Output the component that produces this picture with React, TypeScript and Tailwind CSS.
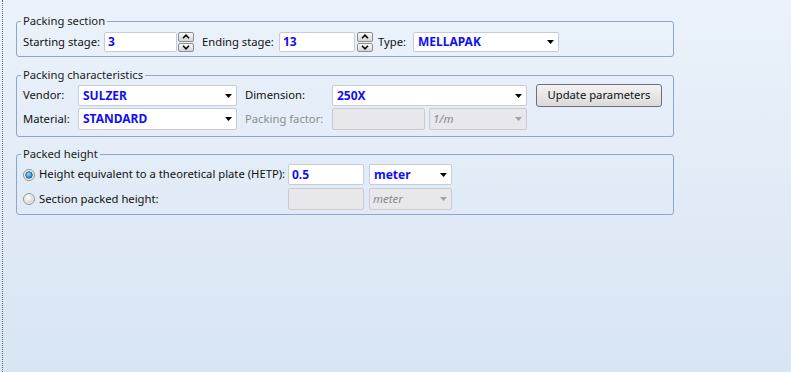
const font = { fontFamily: '"Noto Sans", "Open Sans", sans-serif' };

const Arrow = ({ disabled }: { disabled?: boolean }) => (
  <svg width="7" height="4" viewBox="0 0 7 4" className="shrink-0">
    <path d="M0 0h7L3.5 4z" fill={disabled ? "#a3a3a3" : "#000"} />
  </svg>
);

const Spin = () => (
  <div className="flex h-[20px] w-[16px] flex-col gap-[1px]">
    {[0, 1].map((i) => (
      <div
        key={i}
        className="flex flex-1 items-center justify-center rounded-[2px] border border-[#8c8e92] bg-gradient-to-b from-[#fafafa] to-[#d4d5d8]"
      >
        <svg width="8" height="5" viewBox="0 0 8 5">
          <path
            d={i === 0 ? "M1 4.2L4 1.2L7 4.2" : "M1 0.8L4 3.8L7 0.8"}
            fill="none"
            stroke="#000"
            strokeWidth="1.6"
          />
        </svg>
      </div>
    ))}
  </div>
);

const TextBox = ({ value, w, h = "h-[20px]" }: { value: string; w: string; h?: string }) => (
  <div
    className={`${w} ${h} flex shrink-0 items-center rounded-[2px] border border-[#c5ccd6] bg-white pl-[3px] text-[12px] font-bold text-[#1010f0]`}
  >
    {value}
  </div>
);

const Select = ({ value, w, h = "h-[21px]" }: { value: string; w: string; h?: string }) => (
  <div
    className={`${w} ${h} flex shrink-0 items-center justify-between rounded-[2px] border border-[#c5ccd6] bg-white pl-[4px] pr-[4px] text-[12px] font-bold text-[#1010f0]`}
  >
    <span>{value}</span>
    <Arrow />
  </div>
);

const DisabledBox = ({ w, h = "h-[21px]" }: { w: string; h?: string }) => (
  <div className={`${w} ${h} shrink-0 rounded-[2px] border border-[#cbcbcf] bg-[#e7e7ec]`} />
);

const DisabledSelect = ({ value, w, h = "h-[21px]" }: { value: string; w: string; h?: string }) => (
  <div
    className={`${w} ${h} flex shrink-0 items-center justify-between rounded-[2px] border border-[#cbcbcf] bg-[#e7e7ec] pl-[3px] pr-[4px] text-[11.5px] italic text-[#8a8a8a]`}
  >
    <span>{value}</span>
    <Arrow disabled />
  </div>
);

const Radio = ({ checked }: { checked?: boolean }) => (
  <svg width="12" height="12" viewBox="0 0 12 12" className="shrink-0">
    <defs>
      <radialGradient id={checked ? "rOn" : "rOff"} cx="0.4" cy="0.35" r="0.7">
        <stop offset="0" stopColor={checked ? "#8fe0ff" : "#ffffff"} />
        <stop offset="1" stopColor={checked ? "#1d6fb8" : "#d0d0d0"} />
      </radialGradient>
    </defs>
    <circle cx="6" cy="6" r="5.5" fill="#f2f2f2" stroke="#8e9196" />
    {checked ? (
      <circle cx="6" cy="6" r="3.3" fill="url(#rOn)" stroke="#1b4f8a" strokeWidth="0.8" />
    ) : (
      <circle cx="6" cy="6" r="4.4" fill="url(#rOff)" />
    )}
  </svg>
);

const Label = ({ children, className = "" }: { children: React.ReactNode; className?: string }) => (
  <span className={`shrink-0 whitespace-nowrap ${className}`}>{children}</span>
);

const Group = ({ title, children, className = "" }: { title: string; children: React.ReactNode; className?: string }) => (
  <fieldset className={`m-0 rounded-[3px] border border-[#8fa7c7] px-[6px] ${className}`}>
    <legend className="-ml-[2px] px-[2px] text-[11.25px] leading-[14px] text-[#1b1b1b]">{title}</legend>
    {children}
  </fieldset>
);

export default function App() {
  return (
    <div
      className="flex h-[372px] w-[791px] bg-gradient-to-b from-[#ebf2fb] to-[#d8e5f3] text-[11.25px] text-[#111]"
      style={font}
    >
      <div className="ml-[2px] h-full w-0 border-l border-dotted border-[#5d6b80]" />
      <div className="ml-[13px] flex w-[658px] flex-col pt-[14px]">
        <Group title="Packing section" className="pb-[4px]">
          <div className="mt-[4px] flex h-[20px] items-center">
            <Label className="w-[81px]">Starting stage:</Label>
            <TextBox value="3" w="w-[73px]" />
            <div className="ml-[1px]">
              <Spin />
            </div>
            <Label className="ml-[8px] w-[77px]">Ending stage:</Label>
            <TextBox value="13" w="w-[76px]" />
            <div className="ml-[2px]">
              <Spin />
            </div>
            <Label className="ml-[5px] w-[35px]">Type:</Label>
            <Select value="MELLAPAK" w="w-[146px]" h="h-[20px]" />
          </div>
        </Group>

        <Group title="Packing characteristics" className="mt-[11px] pb-[6px]">
          <div className="mt-[2px] flex h-[23px] items-center">
            <Label className="w-[55px]">Vendor:</Label>
            <Select value="SULZER" w="w-[159px]" />
            <Label className="ml-[8px] w-[87px]">Dimension:</Label>
            <Select value="250X" w="w-[195px]" />
            <button className="ml-[9px] h-[23px] w-[126px] shrink-0 rounded-[3px] border border-[#707070] bg-gradient-to-b from-[#f3f3f3] to-[#dadada] text-[11.25px] text-[#111]">
              Update parameters
            </button>
          </div>
          <div className="mt-[1px] flex h-[22px] items-center">
            <Label className="w-[55px]">Material:</Label>
            <Select value="STANDARD" w="w-[159px]" h="h-[22px]" />
            <Label className="ml-[8px] w-[87px] text-[#8d8d8d]">Packing factor:</Label>
            <DisabledBox w="w-[93px]" h="h-[22px]" />
            <div className="ml-[4px]">
              <DisabledSelect value="1/m" w="w-[98px]" h="h-[22px]" />
            </div>
          </div>
        </Group>

        <Group title="Packed height" className="mt-[10px] pb-[4px]">
          <div className="mt-[3px] flex h-[21px] items-center">
            <div className="flex w-[265px] shrink-0 items-center">
              <Radio checked />
              <Label className="ml-[4px]">Height equivalent to a theoretical plate (HETP):</Label>
            </div>
            <TextBox value="0.5" w="w-[76px]" h="h-[21px]" />
            <div className="ml-[5px]">
              <Select value="meter" w="w-[83px]" />
            </div>
          </div>
          <div className="mt-[3px] flex h-[22px] items-center">
            <div className="flex w-[265px] shrink-0 items-center">
              <Radio />
              <Label className="ml-[4px]">Section packed height:</Label>
            </div>
            <DisabledBox w="w-[76px]" h="h-[22px]" />
            <div className="ml-[5px]">
              <DisabledSelect value="meter" w="w-[83px]" h="h-[22px]" />
            </div>
          </div>
        </Group>
      </div>
    </div>
  );
}
